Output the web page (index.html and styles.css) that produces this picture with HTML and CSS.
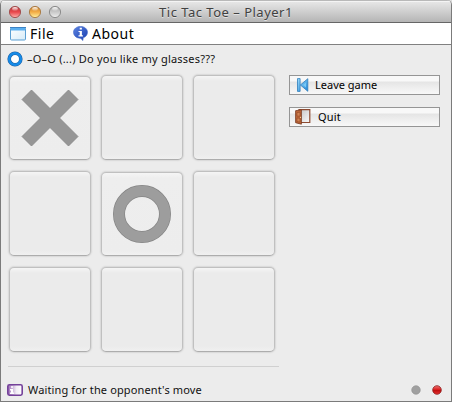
FILE: index.html
```html
<!DOCTYPE html>
<html lang="en">
<head>
<meta charset="utf-8">
<title>Tic Tac Toe – Player1</title>
<link rel="stylesheet" href="styles.css">
</head>
<body>
<div class="window">
  <header class="titlebar">
    <div class="lights">
      <svg width="52" height="14" viewBox="0 0 52 14">
        <defs>
          <linearGradient id="red" x2="0" y2="1"><stop offset="0" stop-color="#b83c3c"/><stop offset=".5" stop-color="#e8474b"/><stop offset="1" stop-color="#ffb4ae"/></linearGradient>
          <linearGradient id="amber" x2="0" y2="1"><stop offset="0" stop-color="#c98130"/><stop offset=".5" stop-color="#f3ac45"/><stop offset="1" stop-color="#fff3a0"/></linearGradient>
          <linearGradient id="gray" x2="0" y2="1"><stop offset="0" stop-color="#a9a9a9"/><stop offset=".5" stop-color="#c9c9c9"/><stop offset="1" stop-color="#eeeeee"/></linearGradient>
          <linearGradient id="shine" x2="0" y2="1"><stop offset="0" stop-color="#fff" stop-opacity=".95"/><stop offset="1" stop-color="#fff" stop-opacity=".1"/></linearGradient>
        </defs>
        <circle cx="6" cy="7" r="5.6" fill="url(#red)" stroke="#9c4a49" stroke-width=".9"/>
        <circle cx="26" cy="7" r="5.6" fill="url(#amber)" stroke="#a5763f" stroke-width=".9"/>
        <circle cx="46" cy="7" r="5.6" fill="url(#gray)" stroke="#858585" stroke-width=".9"/>
        <g fill="url(#shine)"><ellipse cx="6" cy="4" rx="2.8" ry="1.9"/><ellipse cx="26" cy="4" rx="2.8" ry="1.9"/><ellipse cx="46" cy="4" rx="2.8" ry="1.9"/></g>
      </svg>
    </div>
    <h1 class="title">Tic Tac Toe – Player1</h1>
  </header>
  <nav class="menubar">
    <div class="menu menu-file">
      <svg width="16" height="14" viewBox="0 0 16 14">
        <defs><linearGradient id="pane" x2="1" y2="1"><stop offset="0" stop-color="#fff"/><stop offset="1" stop-color="#d6ebf8"/></linearGradient></defs>
        <rect x=".5" y=".5" width="15" height="12.5" rx="1" fill="url(#pane)" stroke="#5b9fd3"/>
        <path d="M1 1h14v2.6H1z" fill="#5aaff0"/><path d="M0 .5h16" stroke="#3c83c6"/>
      </svg>
      <span>File</span>
    </div>
    <div class="menu menu-about">
      <svg width="15" height="15" viewBox="0 0 15 15">
        <defs><linearGradient id="bubble" x2="1" y2="1"><stop offset="0" stop-color="#5d85e2"/><stop offset="1" stop-color="#163cae"/></linearGradient></defs>
        <path d="M7.5.4C3.5.4.5 3 .5 6.2c0 3.3 2.7 5.8 6.3 6 1.5.3 2.2 1.2 2.9 2.4.5-1 .5-2 .4-2.8 2.7-.9 4.4-3 4.4-5.6C14.500 3 11.500.4 7.500.4z" fill="url(#bubble)" stroke="#4168c8" stroke-width=".6"/>
        <path d="M6.700 1.700h2.200v1.800H6.700zM5.500 4.900h3.400v4.400h1v1.100H5.500V9.300h1.200V6H5.500z" fill="#fff"/>
      </svg>
      <span>About</span>
    </div>
  </nav>
  <main class="content">
    <section class="left">
      <div class="chat">
        <svg width="16" height="16" viewBox="0 0 16 16"><circle cx="8" cy="8" r="5.8" fill="#fff" stroke="#245f9e" stroke-width="3.600"/><circle cx="8" cy="8" r="5.800" fill="none" stroke="#168be8" stroke-width="2.500"/></svg>
        <span>–O–O (...) Do you like my glasses???</span>
      </div>
      <div class="board">
        <div class="cell marked">
          <svg width="58" height="58" viewBox="0 0 58 58"><path d="M10.500 1 29 19.500 47.500 1 57 10.500 38.500 29 57 47.500 47.500 57 29 38.500 10.500 57 1 47.500 19.500 29 1 10.500z" fill="#969696" stroke="#858585" stroke-width=".8"/></svg>
        </div>
        <div class="cell"></div><div class="cell"></div>
        <div class="cell"></div>
        <div class="cell marked">
          <svg width="58" height="58" viewBox="0 0 58 58"><circle cx="29" cy="29" r="23" fill="none" stroke="#858585" stroke-width="12"/><circle cx="29" cy="29" r="23" fill="none" stroke="#9d9d9d" stroke-width="10.600"/></svg>
        </div>
        <div class="cell"></div>
        <div class="cell"></div><div class="cell"></div><div class="cell"></div>
      </div>
      <div class="rule"></div>
    </section>
    <aside class="actions">
      <button class="action leave">
        <svg width="12" height="14" viewBox="0 0 12 14">
          <defs><linearGradient id="back" x2="1" y2="1"><stop offset="0" stop-color="#9ddcfb"/><stop offset="1" stop-color="#1b84d8"/></linearGradient></defs>
          <path d="M.5.600h2.600v12.800H.500zM10.800.700v12.600L3.400 7z" fill="url(#back)" stroke="#2e7dbb" stroke-width=".8"/><path d="M9 4.500v5L6 7z" fill="#79c8f4"/>
        </svg>
        <span>Leave game</span>
      </button>
      <button class="action quit">
        <svg width="16" height="16" viewBox="0 0 16 16">
          <defs><linearGradient id="room" x2="1" y2="1"><stop offset="0" stop-color="#c4c4c4"/><stop offset="1" stop-color="#fafafa"/></linearGradient></defs>
          <path d="M4 .7h10.800v12.800H4z" fill="url(#room)" stroke="#8d4b31" stroke-width="1.200"/>
          <path d="M.6 1.700 6.400.8v14.400l-5.800-1.500z" fill="#bd6539" stroke="#753820" stroke-width=".8"/>
          <path d="M2 3.600l3-.4v4L2 7zM2 9l3 .3v3.800l-3-.6z" fill="#d28354" stroke="#914621" stroke-width=".6"/><circle cx="5.500" cy="8.300" r=".6" fill="#ffe4a0"/>
        </svg>
        <span>Quit</span>
      </button>
    </aside>
  </main>
  <footer class="status">
    <svg width="16" height="12" viewBox="0 0 16 12">
      <defs><linearGradient id="card" x2="1"><stop offset="0" stop-color="#9b6bb5"/><stop offset=".6" stop-color="#f2eef5"/><stop offset="1" stop-color="#fff"/></linearGradient></defs>
      <rect x=".8" y=".8" width="14.400" height="10.400" rx="1.600" fill="url(#card)" stroke="#74419a" stroke-width="1.600"/>
      <path d="M4 2.300h2v1.500H4zM3 5h3v3.500h1V10H3V8.500h1v-2H3z" fill="#fff"/>
    </svg>
    <span class="message">Waiting for the opponent's move</span>
    <svg class="leds" width="31" height="12" viewBox="0 0 31 12">
      <defs><linearGradient id="led" x2="0" y2="1"><stop offset="0" stop-color="#ed7777"/><stop offset=".45" stop-color="#db2020"/><stop offset=".5" stop-color="#bb0c0c"/><stop offset="1" stop-color="#e83333"/></linearGradient></defs>
      <circle cx="5" cy="6" r="4.300" fill="#a0a0a0" stroke="#909090" stroke-width=".6"/><circle cx="26" cy="6" r="4.300" fill="url(#led)" stroke="#8c2222" stroke-width=".8"/>
    </svg>
  </footer>
</div>
</body>
</html>
```
FILE: styles.css
```css
* { box-sizing: border-box; }
body {
  margin: 0;
  background: #dcdcdc;
  font-family: "Noto Sans", "Open Sans", sans-serif;
  font-size: 11px;
  color: #111;
}
svg { display: block; flex: none; }
.window {
  display: flex;
  flex-direction: column;
  width: 452px;
  height: 402px;
  background: #ececec;
  border: solid #7b7b7b;
  border-width: 0 1px 1px;
  border-radius: 5px 5px 0 0;
  overflow: hidden;
}
.titlebar {
  display: grid;
  grid-template-columns: 56px 1fr 64px;
  align-items: center;
  height: 23px;
  padding: 1px 0 0 8px;
  background: linear-gradient(#b9b9b9 0 1px, #f4f4f4 1px 2px, #e6e6e6 2px, #b5b5b5);
  border-bottom: 1px solid #666;
}
.title {
  margin: 0;
  text-align: center;
  font-size: 13px;
  font-weight: 400;
  line-height: 20px;
  letter-spacing: 0.5px;
  color: #414141;
  white-space: nowrap;
  text-shadow: 0 1px 0 #e2e2e2;
}
.menubar {
  display: flex;
  height: 22px;
  padding-left: 9px;
  background: #fff;
  border-bottom: 1px solid #808080;
  font-size: 14px;
  line-height: 20px;
  letter-spacing: 0.5px;
  color: #000;
}
.menu { display: flex; align-items: center; gap: 4px; }
.menu-file { width: 63px; }
.content { display: flex; height: 325px; flex: none; }
.left { width: 288px; padding-left: 6px; }
.chat { display: flex; align-items: center; gap: 4px; height: 28px; letter-spacing: 0.22px; white-space: nowrap; }
.chat span, .action span { padding-bottom: 2px; }
.board {
  display: grid;
  grid-template-columns: repeat(3, 82px);
  grid-template-rows: repeat(3, 85px);
  gap: 11px 10px;
  margin: 2px 0 0 2px;
}
.cell {
  display: flex;
  align-items: center;
  justify-content: center;
  background: linear-gradient(#f5f5f5, #ebebeb 5px, #ebebeb 78px, #f0f0f0);
  border: 1px solid #c0c0c0;
  border-bottom-color: #adadad;
  border-radius: 5px;
  box-shadow: 0 0 2px #aaa;
}
.marked { margin-top: 1px; background: linear-gradient(#f5f5f5, #eee 5px, #ededed 78px, #f1f1f1); }
.rule { width: 271px; height: 1px; margin: 14px 0 0 1px; background: #d0d0d0; }
.actions { display: flex; flex-direction: column; gap: 12px; padding-top: 30px; }
.action {
  display: flex;
  align-items: center;
  width: 151px;
  height: 20px;
  padding: 0;
  font: inherit;
  color: #000;
  border: 1px solid #959595;
  border-radius: 0;
  background: linear-gradient(#f8f8f8 0 5px, #e5e5e5 6px, #f8f8f8);
}
.leave { padding-left: 7px; gap: 6px; }
.quit { padding-left: 5px; gap: 7px; letter-spacing: 0.2px; }
.status { display: flex; align-items: center; height: 31px; padding: 8px 9px 0 6px; gap: 5px; }
.message { padding-bottom: 1px; letter-spacing: 0.14px; }
.leds { margin-left: auto; }
```
